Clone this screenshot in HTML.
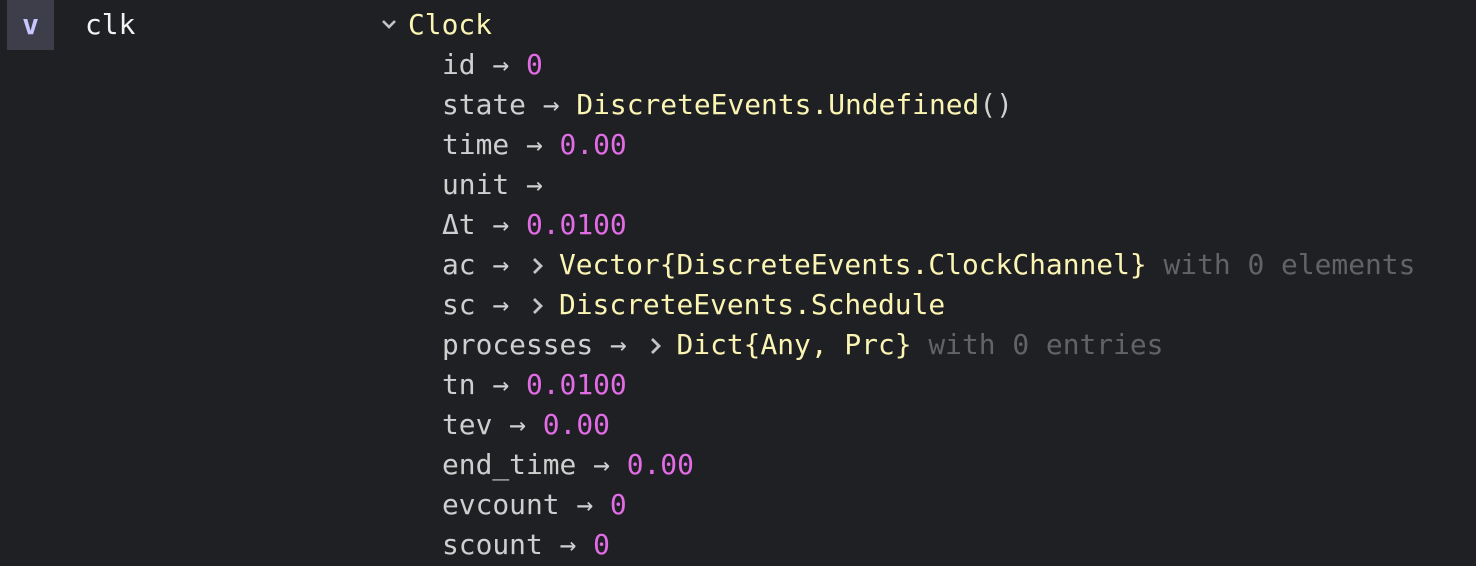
<!DOCTYPE html>
<html><head><style>
html,body{margin:0;padding:0;background:#1f2023;width:1476px;height:566px;overflow:hidden}
body{font-family:"DejaVu Sans Mono","Liberation Mono",monospace;font-size:27.9px;color:#cfcfcf;position:relative}
.badge{position:absolute;left:7px;top:0;width:47px;height:50px;background:#3e3e4a;color:#c9c6ff;font-weight:bold;text-align:center;line-height:50px;font-size:28px}
.clk{position:absolute;left:85px;top:5px;line-height:40px;color:#f2f2f2}
.row{position:absolute;line-height:40px;white-space:pre}
.y{color:#fbf5b4}.m{color:#e26be6}.g{color:#626366}
.chev{display:inline-block;width:33px;height:20px;vertical-align:middle;position:relative}
.chev svg{position:absolute;left:2px;top:-4px}
</style></head><body>
<div class="badge">v</div>
<div class="clk">clk</div>
<div class="row" style="left:378px;top:5px"><svg width="22" height="20" style="vertical-align:-1px" viewBox="0 0 22 20"><path d="M5 6 L11 12 L17 6" fill="none" stroke="#c4c4c4" stroke-width="2.6"/></svg><span class="y" style="margin-left:8px">Clock</span></div>
<div class="row" style="left:442px;top:45px">id → <span class="m">0</span></div>
<div class="row" style="left:442px;top:85px">state → <span class="y">DiscreteEvents.Undefined</span>()</div>
<div class="row" style="left:442px;top:125px">time → <span class="m">0.00</span></div>
<div class="row" style="left:442px;top:165px">unit →</div>
<div class="row" style="left:442px;top:205px">Δt → <span class="m">0.0100</span></div>
<div class="row" style="left:442px;top:245px">ac → <span class="chev"><svg width="20" height="28" viewBox="0 0 20 28"><path d="M6 7 L13 14 L6 21" fill="none" stroke="#c4c4c4" stroke-width="2.8"/></svg></span><span class="y">Vector{DiscreteEvents.ClockChannel}</span> <span class="g">with 0 elements</span></div>
<div class="row" style="left:442px;top:285px">sc → <span class="chev"><svg width="20" height="28" viewBox="0 0 20 28"><path d="M6 7 L13 14 L6 21" fill="none" stroke="#c4c4c4" stroke-width="2.8"/></svg></span><span class="y">DiscreteEvents.Schedule</span></div>
<div class="row" style="left:442px;top:325px">processes → <span class="chev"><svg width="20" height="28" viewBox="0 0 20 28"><path d="M6 7 L13 14 L6 21" fill="none" stroke="#c4c4c4" stroke-width="2.8"/></svg></span><span class="y">Dict{Any, Prc}</span> <span class="g">with 0 entries</span></div>
<div class="row" style="left:442px;top:365px">tn → <span class="m">0.0100</span></div>
<div class="row" style="left:442px;top:405px">tev → <span class="m">0.00</span></div>
<div class="row" style="left:442px;top:445px">end_time → <span class="m">0.00</span></div>
<div class="row" style="left:442px;top:485px">evcount → <span class="m">0</span></div>
<div class="row" style="left:442px;top:525px">scount → <span class="m">0</span></div>
</body></html>
